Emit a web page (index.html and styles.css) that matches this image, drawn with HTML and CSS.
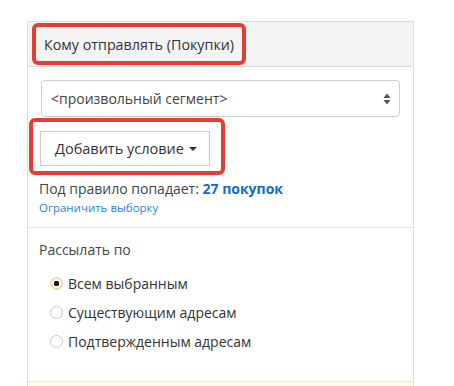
FILE: index.html
```html
<!DOCTYPE html>
<html lang="ru">
<head>
<meta charset="utf-8">
<link rel="stylesheet" href="styles.css">
</head>
<body>
<div class="panel">
  <div class="panel-head">
    <span class="mark mark-title">Кому отправлять (Покупки)</span>
  </div>
  <div class="section section-who">
    <div class="select">
      <span>&lt;произвольный сегмент&gt;</span>
      <svg class="updown" width="8" height="12" viewBox="0 0 8 12"><path d="M4 0.5 L7.5 5 L0.5 5 Z" fill="#555"/><path d="M4 11.5 L7.5 7 L0.5 7 Z" fill="#555"/></svg>
    </div>
    <div class="mark mark-btn">
      <button class="btn">Добавить условие <span class="caret"></span></button>
    </div>
    <div class="count">Под правило попадает: <b class="count-num">27 покупок</b></div>
    <a class="limit">Ограничить выборку</a>
  </div>
  <div class="section section-send">
    <div class="label">Рассылать по</div>
    <ul class="radios">
      <li class="radio-row"><span class="radio radio-on"></span>Всем выбранным</li>
      <li class="radio-row"><span class="radio"></span>Существующим адресам</li>
      <li class="radio-row"><span class="radio"></span>Подтвержденным адресам</li>
    </ul>
  </div>
  <div class="panel-foot"></div>
</div>
</body>
</html>
```
FILE: styles.css
```css
* { box-sizing: border-box; }
html, body { margin: 0; padding: 0; background: #fff; }
body {
  font-family: "Open Sans", "Noto Sans", sans-serif;
  color: #333;
  font-size: 14px;
}
.panel {
  margin: 21px 0 0 27px;
  width: 387px;
  border: 1px solid #ddd;
  border-bottom: none;
}
.panel-head {
  height: 45px;
  background: #f4f4f4;
  border-bottom: 1px solid #ddd;
  padding: 1px 0 0 4px;
}
.mark {
  border: 4px solid #e23e33;
  border-radius: 6px;
}
.mark-title {
  display: inline-flex;
  align-items: center;
  height: 42px;
  padding: 0 8px 0 8px;
  font-size: 14.3px;
  color: #333;
}
.section { padding: 13px 13px 0 11px; }
.section-who { height: 161px; border-bottom: 1px solid #e6e6e6; }
.select {
  height: 37px;
  margin-left: 2px;
  border: 1px solid #ccc;
  border-radius: 4px;
  display: flex;
  align-items: center;
  justify-content: space-between;
  padding: 0 8px 0 9px;
  font-size: 14px;
  color: #444;
}
.updown { display: block; }
.mark-btn {
  display: inline-block;
  margin: 1px 0 0 -10px;
  padding: 9px 11px 5px 7px;
}
.btn {
  display: flex;
  align-items: center;
  width: 170px;
  height: 35px;
  border: 1px solid #ccc;
  border-radius: 0;
  background: #fff;
  font-family: inherit;
  font-size: 14.5px;
  color: #333;
  padding: 0 0 0 14px;
}
.caret {
  display: inline-block;
  width: 0; height: 0;
  margin-left: 5px;
  border-left: 4px solid transparent;
  border-right: 4px solid transparent;
  border-top: 4px solid #333;
}
.count { margin-top: 4px; font-size: 14px; color: #444; line-height: 20px; }
.count-num { color: #0b6ec4; font-weight: 700; }
.limit { display: block; font-size: 11.5px; color: #2b86d3; line-height: 18px; }
.section-send { height: 153px; padding-top: 12px; }
.label { font-size: 14px; color: #444; line-height: 20px; }
.radios { list-style: none; margin: 9px 0 0; padding: 0 0 0 11px; }
.radio-row {
  display: flex;
  align-items: center;
  height: 29px;
  font-size: 14px;
  color: #333;
}
.radio {
  width: 13px; height: 13px;
  border: 1px solid #c8c8c8;
  border-radius: 50%;
  margin-right: 5px;
  flex: none;
  background: #fff;
}
.radio-on {
  border: 2px solid #f1d9a6;
  background: radial-gradient(circle, #111 0 2.5px, #fff 3px);
}
.panel-foot {
  height: 6px;
  border-top: 1px solid #e6e6e6;
  background: #fdfde8;
}
```
